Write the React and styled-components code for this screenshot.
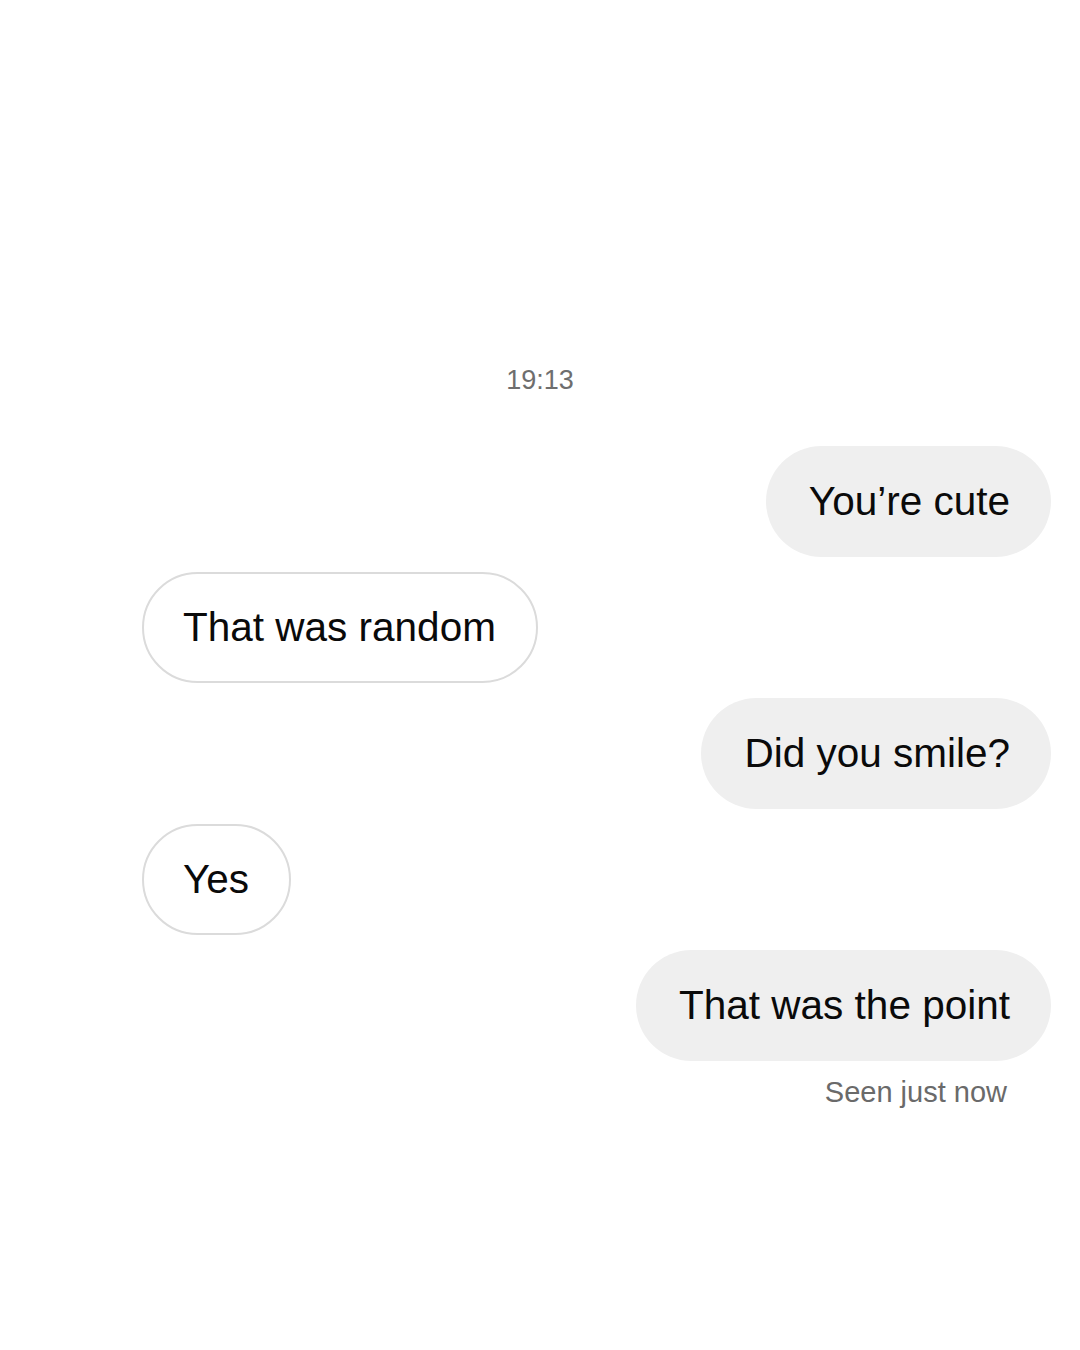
import styled, { createGlobalStyle } from 'styled-components';

const GlobalStyle = createGlobalStyle`
  html, body {
    margin: 0;
    padding: 0;
    background: #fff;
  }
  body {
    font-family: "Liberation Sans", Arial, sans-serif;
    -webkit-font-smoothing: antialiased;
  }
`;

const messages = [
  { id: 1, mine: true, text: 'You\u2019re cute' },
  { id: 2, mine: false, text: 'That was random' },
  { id: 3, mine: true, text: 'Did you smile?' },
  { id: 4, mine: false, text: 'Yes' },
  { id: 5, mine: true, text: 'That was the point' },
];

const App = () => {
  return (
    <>
      <GlobalStyle />
      <Thread>
        <Timestamp>19:13</Timestamp>
        <Messages>
          {messages.map((m) => (
            <Row key={m.id} $mine={m.mine}>
              <Bubble $mine={m.mine}>{m.text}</Bubble>
            </Row>
          ))}
        </Messages>
        <Seen>Seen just now</Seen>
      </Thread>
    </>
  );
};

const Thread = styled.div`
  width: 1080px;
  height: 1350px;
  box-sizing: border-box;
  padding: 364px 29px 0 142px;
  display: flex;
  flex-direction: column;
  background: #fff;
`;

const Timestamp = styled.div`
  align-self: center;
  margin-left: -113px;
  font-size: 27px;
  line-height: 32px;
  color: #6e6e6e;
`;

const Messages = styled.div`
  margin-top: 50px;
  display: flex;
  flex-direction: column;
  gap: 15px;
`;

const Row = styled.div`
  display: flex;
  justify-content: ${(p) => (p.$mine ? 'flex-end' : 'flex-start')};
`;

const Bubble = styled.div`
  box-sizing: border-box;
  height: 111px;
  display: flex;
  align-items: center;
  padding: 0 ${(p) => (p.$mine ? '41px 0 43px' : '40px 0 39px')};
  border-radius: 56px;
  font-size: 40.5px;
  color: #0a0a0a;
  white-space: nowrap;
  background: ${(p) => (p.$mine ? '#efefef' : '#fff')};
  border: ${(p) => (p.$mine ? 'none' : '2px solid #dbdbdb')};
`;

const Seen = styled.div`
  align-self: flex-end;
  margin-top: 14px;
  margin-right: 44px;
  font-size: 29px;
  line-height: 34px;
  color: #6a6a6a;
`;

export default App;
